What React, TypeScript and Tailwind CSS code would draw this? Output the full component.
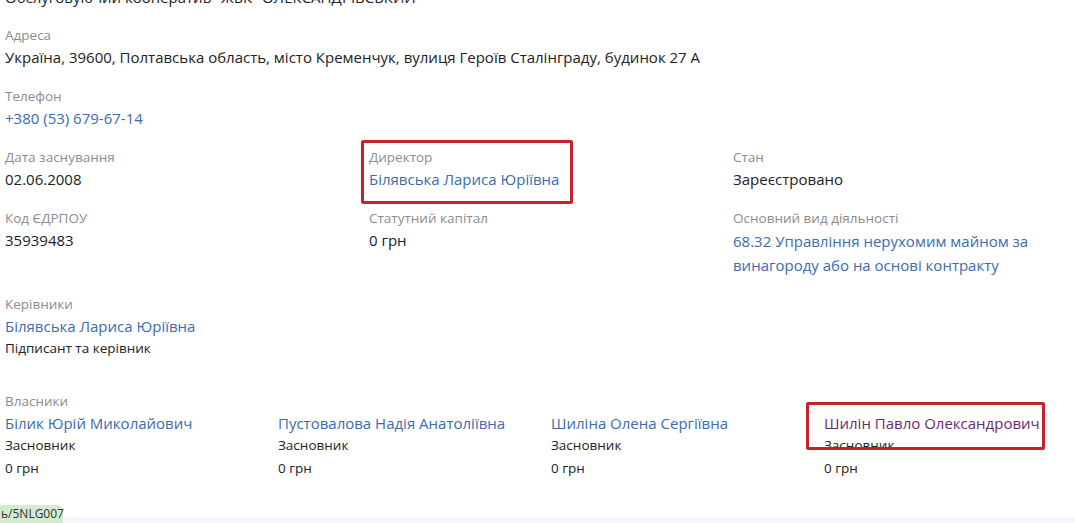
import React from "react";

const Label = ({ children }: { children: React.ReactNode }) => (
  <div className="text-[13.5px] leading-[22px] text-[#8c8c8c]">{children}</div>
);

const Value = ({ children }: { children: React.ReactNode }) => (
  <div className="text-[15px] leading-[22px] text-[#222]">{children}</div>
);

const Link = ({ children, visited }: { children: React.ReactNode; visited?: boolean }) => (
  <a
    className={
      visited
        ? "block text-[15px] leading-[22px] text-[#6b2c6e]"
        : "block text-[15px] leading-[22px] text-[#3b6cb0]"
    }
  >
    {children}
  </a>
);

const owners = [
  { name: "Білик Юрій Миколайович" },
  { name: "Пустовалова Надія Анатоліївна" },
  { name: "Шиліна Олена Сергіївна" },
  { name: "Шилін Павло Олександрович", visited: true, boxed: true },
];

export default function App() {
  return (
    <div
      className="relative w-[1075px] h-[523px] overflow-hidden bg-white"
      style={{ fontFamily: '"Open Sans", "Noto Sans", sans-serif' }}
    >
      <div className="pl-[5px]">
        <div className="-mt-[14px] text-[15px] leading-[22px] text-[#222]">
          Обслуговуючий кооператив "ЖБК "ОЛЕКСАНДРІВСЬКИЙ"
        </div>

        <div className="mt-[16px]">
          <Label>Адреса</Label>
          <Value>Україна, 39600, Полтавська область, місто Кременчук, вулиця Героїв Сталінграду, будинок 27 А</Value>
        </div>

        <div className="mt-[17px]">
          <Label>Телефон</Label>
          <Link>+380 (53) 679-67-14</Link>
        </div>

        <div className="mt-[17px] grid grid-cols-[364px_364px_1fr] gap-y-[17px]">
          <div>
            <Label>Дата заснування</Label>
            <Value>02.06.2008</Value>
          </div>
          <div className="relative">
            <Label>Директор</Label>
            <Link>Білявська Лариса Юріївна</Link>
            <div className="absolute left-[-8px] top-[-6px] w-[212px] h-[64px] border-[3px] border-[#c3242b] rounded-[2px]" />
          </div>
          <div>
            <Label>Стан</Label>
            <Value>Зареєстровано</Value>
          </div>

          <div>
            <Label>Код ЄДРПОУ</Label>
            <Value>35939483</Value>
          </div>
          <div>
            <Label>Статутний капітал</Label>
            <Value>0 грн</Value>
          </div>
          <div>
            <Label>Основний вид діяльності</Label>
            <div className="w-[320px] text-[15px] leading-[24px] text-[#3b6cb0]">
              68.32 Управління нерухомим майном за винагороду або на основі контракту
            </div>
          </div>
        </div>

        <div className="mt-[16px]">
          <Label>Керівники</Label>
          <Link>Білявська Лариса Юріївна</Link>
          <div className="text-[13.5px] leading-[23px] text-[#222]">Підписант та керівник</div>
        </div>

        <div className="mt-[30px]">
          <Label>Власники</Label>
          <div className="grid grid-cols-[273px_273px_273px_1fr]">
            {owners.map((o) => (
              <div key={o.name} className="relative">
                <Link visited={o.visited}>{o.name}</Link>
                <div className="text-[13.5px] leading-[23px] text-[#222]">Засновник</div>
                <div className="text-[13.5px] leading-[22px] text-[#222]">0 грн</div>
                {o.boxed && (
                  <div className="absolute left-[-18px] top-[-10px] w-[239px] h-[48px] border-[3px] border-[#c3242b] rounded-[2px]" />
                )}
              </div>
            ))}
          </div>
        </div>
      </div>

      <div className="absolute left-0 right-0 bottom-0 h-[6px] bg-[#f4f6f9]" />
      <div className="absolute left-0 bottom-0 h-[18px] w-[63px] rounded-tr-[6px] bg-[#d3ecd0] pl-[1px] text-[12px] leading-[18px] text-[#333] whitespace-nowrap">
        ь/5NLG007
      </div>
    </div>
  );
}
